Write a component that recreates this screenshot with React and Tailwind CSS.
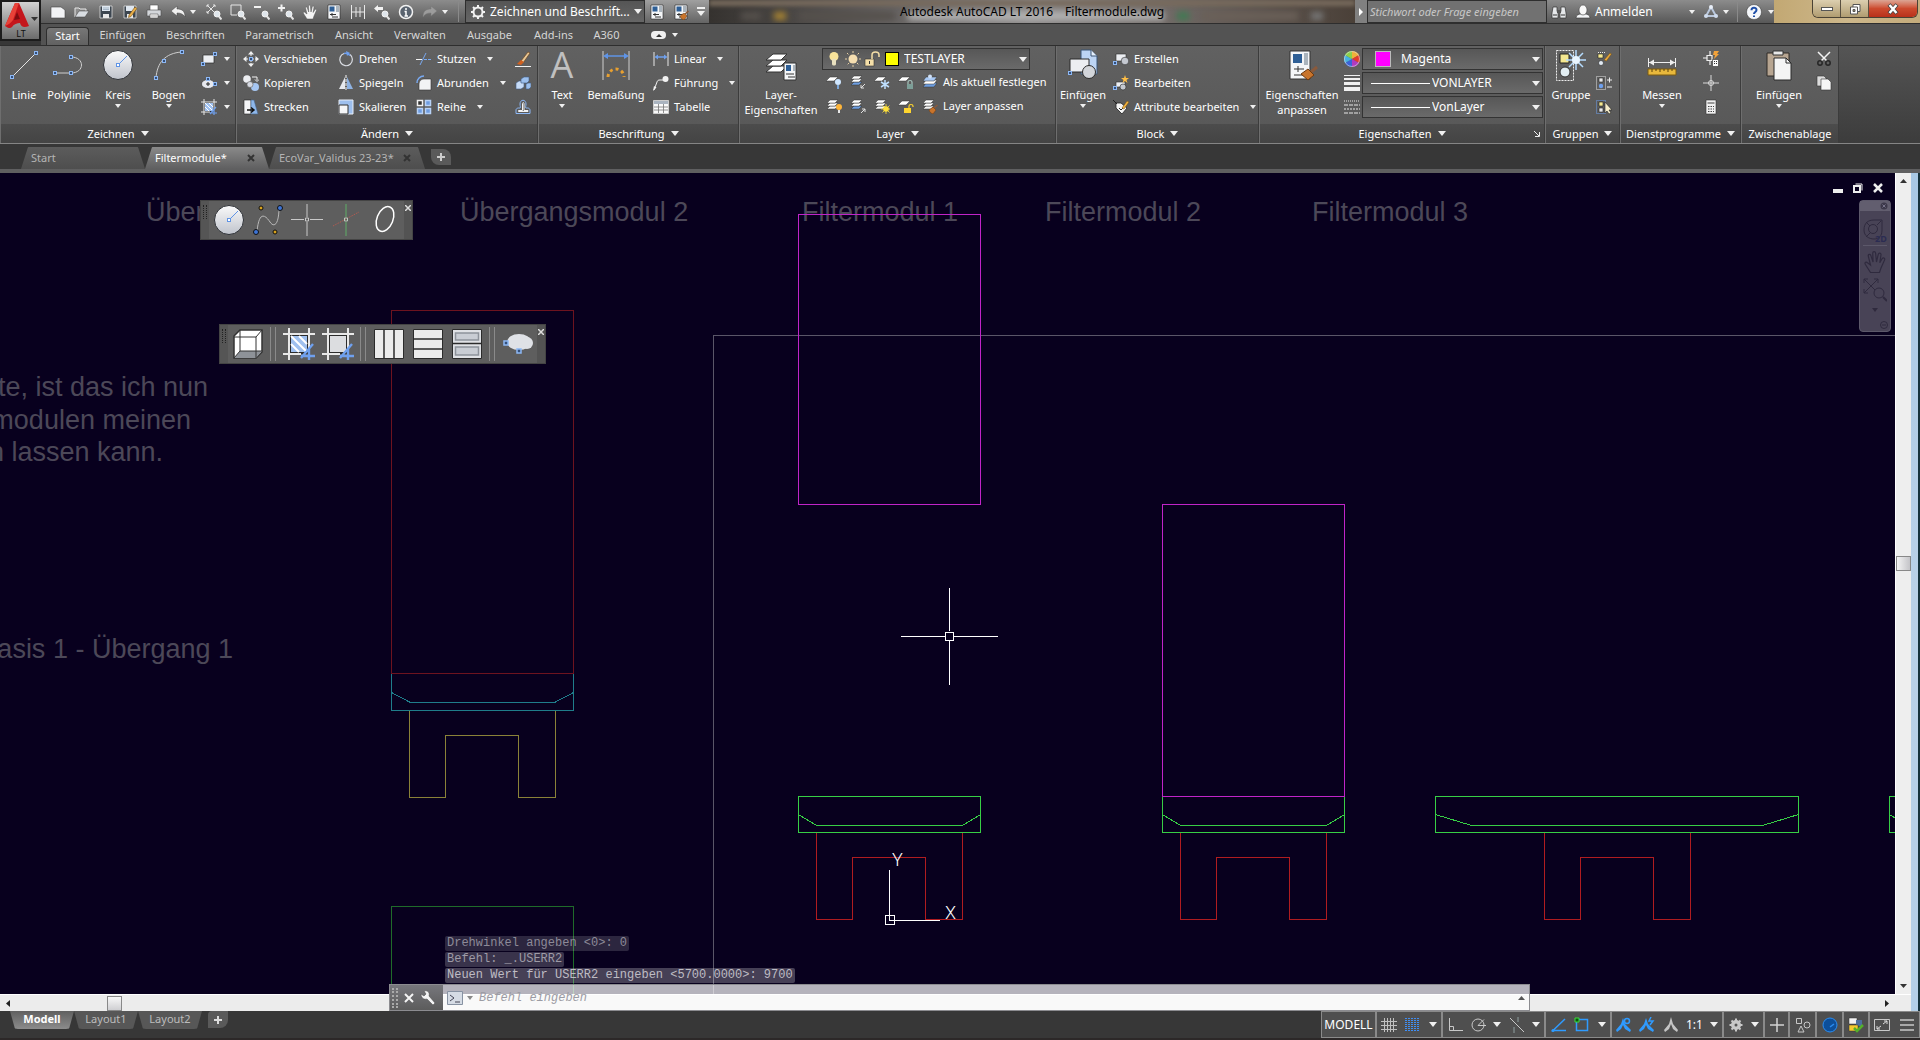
import { clsx } from 'clsx'

/* ---------- icons ---------- */

const BLUE = '#8db8f5'

function Svg({ size = 16, box = 16, className, children }) {
  return (
    <svg width={size} height={size} viewBox={`0 0 ${box} ${box}`} fill="none" className={clsx('shrink-0', className)} aria-hidden="true">
      {children}
    </svg>
  )
}

function Caret({ className }) {
  return (
    <svg width="6" height="4" viewBox="0 0 6 4" className={clsx('shrink-0', className)} aria-hidden="true">
      <path d="M0 0h6L3 4z" fill="#f0f0f0" />
    </svg>
  )
}

function BigCaret({ className }) {
  return (
    <svg width="8" height="5" viewBox="0 0 8 5" className={clsx('shrink-0', className)} aria-hidden="true">
      <path d="M0 0h8L4 5z" fill="#f0f0f0" />
    </svg>
  )
}

const grip = (x, y) => <rect key={`${x}-${y}`} x={x - 1.5} y={y - 1.5} width="3" height="3" fill="#35507a" stroke={BLUE} />

const lens = (
  <>
    <circle cx="11" cy="10" r="3" fill="#dfe6ec" stroke="#f2f2f2" />
    <path d="M13 12.500l2.500 3" stroke="#e6e6e6" strokeWidth="2" />
  </>
)

const layerStack = (
  <>
    <path d="M4 8h8l-3 3H1z" fill="#f4f4f4" stroke="#333" strokeWidth=".5" />
    <path d="M4 5h8L9 8H1z" fill="#fff" stroke="#333" strokeWidth=".5" />
    <path d="M4 2h8L9 5H1z" fill="#fff" stroke="#333" strokeWidth=".5" />
  </>
)

const layerStackBlue = (
  <>
    <path d="M4 8h8l-3 3H1z" fill="#6e9ee0" stroke="#333" strokeWidth=".5" />
    <path d="M4 5h8L9 8H1z" fill="#fff" stroke="#333" strokeWidth=".5" />
    <path d="M4 2h8L9 5H1z" fill="#fff" stroke="#333" strokeWidth=".5" />
  </>
)

const singleLayer = <path d="M4 3h8L8 7H0z" fill="#fff" stroke="#333" strokeWidth=".5" />

const palette = (
  <>
    <path d="M2 1h12v14H2z" fill="#f4f6f8" stroke="#222" strokeWidth=".6" />
    <path d="M3.500 2.500h5v5h-5z" fill="#2e5f96" />
    <path d="M10 2h3v6h-3z" fill="#aab4bd" />
    <path d="M4 10.500h6M6 9v3M6 13h6" stroke="#333" />
  </>
)

const brush = (
  <>
    <path d="M15.500 7L12 10" stroke="#8a5a3c" strokeWidth="1.500" />
    <path d="M7 12l4-3 3 3-3 4-2-1-1-1z" fill="#c8742c" stroke="#6d3a10" strokeWidth=".5" />
  </>
)

const ICONS = {
  new: <path d="M1 3h10l4 3v8H1z" fill="#f2f3f5" stroke="#444" strokeWidth=".6" />,
  open: (
    <>
      <path d="M1 13V4h4l1 1h6v2" fill="#8d8d8d" stroke="#e8e8e8" />
      <path d="M1 13l4-6h10l-4 6z" fill="#d9dde2" stroke="#3a3a3a" strokeWidth=".5" />
    </>
  ),
  save: (
    <>
      <path d="M2 2h12v12H2z" fill="#3d4650" stroke="#dcdcdc" strokeWidth=".8" />
      <path d="M4 2h8v5H4z" fill="#dfe7f0" />
      <path d="M5 10h6v4H5z" fill="#e9e9e9" />
      <path d="M5 4h6M5 5.500h6" stroke="#7d93aa" strokeWidth=".6" />
    </>
  ),
  saveAs: (
    <>
      <path d="M2 2h12v12H2z" fill="#3d4650" stroke="#dcdcdc" strokeWidth=".8" />
      <path d="M4 2h8v5H4z" fill="#dfe7f0" />
      <path d="M5 10h6v4H5z" fill="#e9e9e9" />
      <path d="M7 11l6-8 2 1.500-6 8-2.500 1z" fill="#eab04a" stroke="#73501a" strokeWidth=".6" />
    </>
  ),
  print: (
    <>
      <path d="M4 1h8v6H4z" fill="#fff" stroke="#555" strokeWidth=".6" />
      <path d="M1 6h14v6H1z" fill="#d3d6da" stroke="#4a4a4a" strokeWidth=".6" />
      <path d="M4 10h8v4H4z" fill="#f6f6f6" stroke="#555" strokeWidth=".6" />
      <path d="M5 12h6" stroke="#888" strokeWidth=".6" />
    </>
  ),
  undo: <path d="M1 7l6-5v3c5 0 8 2 8 8-2-3-4-4-8-4v3z" fill="#f0f0f0" stroke="#444" strokeWidth=".5" />,
  redo: <path d="M15 7L9 2v3C4 5 1 7 1 13c2-3 4-4 8-4v3z" fill="#9c9c9c" stroke="#777" strokeWidth=".5" />,
  zoomExt: (
    <>
      <path d="M1 1l8 8M9 1L1 9M1 3V1h2M7 1h2v2M1 7v2h2" stroke="#e6e6e6" />
      {lens}
    </>
  ),
  zoomWin: (
    <>
      <path d="M1 1h10v8M1 1v10h6" stroke="#e6e6e6" />
      {lens}
    </>
  ),
  zoomOut: (
    <>
      <path d="M0 3h7" stroke="#f2f2f2" strokeWidth="2" />
      {lens}
    </>
  ),
  zoomIn: (
    <>
      <path d="M0 4h7M3.500 .5v7" stroke="#f2f2f2" strokeWidth="2" />
      {lens}
    </>
  ),
  zoomPrev: (
    <>
      <path d="M0 4.500L4 1v2h5v3H4v2z" fill="#f2f2f2" />
      {lens}
    </>
  ),
  hand: (
    <path
      d="M5 15L1.500 9.500c-.6-1.200.6-1.900 1.500-1L5 10 3.500 4c-.2-1.200 1.300-1.500 1.700-.4L6.700 8 6.500 2c0-1.300 1.700-1.300 1.900 0L9 8l1.200-5.200c.4-1.200 1.900-.8 1.800.4L11.200 8.500l1.600-2.800c.7-1 2-.3 1.600.9L12 12l-1 3z"
      fill="#f4f4f4"
      stroke="#555"
      strokeWidth=".5"
    />
  ),
  props: palette,
  match: (
    <>
      {palette}
      {brush}
    </>
  ),
  dist: <path d="M1.500 1v14M14.500 1v14M6 3v10M10 3v10M1 8h14" stroke="#e8e8e8" />,
  info: (
    <>
      <circle cx="8" cy="8" r="6.500" fill="#5a6470" stroke="#f2f2f2" strokeWidth="1.500" />
      <path d="M8 4v2M6.500 7.500H8V12M6.500 12h3.500" stroke="#fff" strokeWidth="1.500" />
    </>
  ),
  gear: (
    <>
      <circle cx="8" cy="8" r="4.500" stroke="#f2f2f2" strokeWidth="2" />
      <path d="M8 1v3M8 12v3M1 8h3M12 8h3M3 3l2 2M11 11l2 2M13 3l-2 2M5 11l-2 2" stroke="#f2f2f2" strokeWidth="2" />
    </>
  ),
  binoculars: (
    <>
      <path d="M2 3h4v4l1 2v5H1V9zM10 3h4l1 6v5H9V9l1-2z" fill="#e6e8ea" stroke="#333" strokeWidth=".7" />
      <path d="M6 6h4v3H6z" fill="#555" />
      <path d="M2 11h4M10 11h4" stroke="#333" />
    </>
  ),
  user: (
    <>
      <path d="M1 14c0-3 3-4 5-4h4c2 0 5 1 5 4z" fill="#f2f4f6" stroke="#333" strokeWidth=".6" />
      <ellipse cx="8" cy="6" rx="4" ry="5" fill="#f8f8f8" stroke="#444" strokeWidth=".6" />
    </>
  ),
  exchange: (
    <>
      <path d="M8 3l5 9H3z" stroke="#b9c7dc" strokeWidth="2" />
      <circle cx="8" cy="3" r="2" fill="#e9eff8" />
      <circle cx="3" cy="12" r="2" fill="#cfdbed" />
      <circle cx="13" cy="12" r="2" fill="#cfdbed" />
    </>
  ),
  help: (
    <>
      <circle cx="8" cy="8" r="7.500" fill="#f5f7fa" stroke="#333" strokeWidth=".5" />
      <path d="M5.500 6.200C5.500 3 10.500 3 10.500 6c0 2-2.500 2-2.500 4M8 11.500v1.500" stroke="#1f4fa8" strokeWidth="2" />
    </>
  ),
  rect: (
    <>
      <path d="M2 4h11v8H2z" fill="#eceef2" stroke="#2c2c2c" strokeWidth=".7" />
      {grip(2, 13)}
      {grip(14, 3)}
    </>
  ),
  ellipse: (
    <>
      <ellipse cx="7" cy="9" rx="6.500" ry="4.500" fill="#e6e8ee" stroke="#2c2c2c" strokeWidth=".6" />
      <path d="M5 9h4M7 7v4" stroke="#222" />
      {grip(7, 4)}
      {grip(14, 9)}
    </>
  ),
  hatch: (
    <>
      <path d="M3.500 3.500h9v9h-9z" fill="#9fc0ef" stroke="#2b2b2b" />
      <path d="M4 8l4 4M4 4l8 8M8 4l4 4" stroke="#fff" />
      <path d="M3 0v16M13 0v10M0 3h16M0 13h9" stroke="#e8e8e8" />
      <path d="M9 15l6-7M9 14h7M13 10v6" stroke="#6fa0ee" strokeWidth="1.200" />
    </>
  ),
  boundary: (
    <>
      <path d="M3.500 3.500h9v9h-9z" fill="#dcdde0" stroke="#2b2b2b" />
      <path d="M3 0v16M13 0v10M0 3h16M0 13h9" stroke="#e8e8e8" />
      <path d="M9 15l6-7M9 14h7M13 10v6" stroke="#6fa0ee" strokeWidth="1.200" />
    </>
  ),
  move: (
    <>
      <path d="M8 0l3 3.500H5zM8 16l3-3.500H5zM0 8l3.500-3v6zM16 8l-3.500-3v6z" fill="#f0f0f0" />
      <path d="M8 3v10M3 8h10" stroke="#f0f0f0" strokeDasharray="2 1" />
      <rect x="6.500" y="6.500" width="3" height="3" fill="#35507a" stroke={BLUE} />
    </>
  ),
  copy: (
    <>
      <circle cx="4" cy="4" r="3.800" fill="#eceef2" />
      <circle cx="12" cy="12" r="4" fill="#a6c6f2" />
      <circle cx="7" cy="9.500" r="3" fill="#d5d9e2" stroke="#5e5e5e" strokeWidth=".6" />
      <path d="M9 2h5v3M12 4.500l2 2 2-2" stroke="#f2f2f2" />
    </>
  ),
  stretch: (
    <>
      <path d="M1 1h7v14H1z" fill="#f4f5f7" stroke="#222" strokeWidth=".6" />
      <path d="M8 1h3l4 14H8z" fill="#8eb7ea" stroke="#46648c" strokeWidth=".6" />
      <path d="M4 11h6M8 8.500l3 2.500-3 2.500" stroke="#111" strokeWidth="1.500" />
    </>
  ),
  rotate: (
    <>
      <path d="M12 3.500A6.300 6.300 0 1 1 6 2.500" stroke="#d9dce2" strokeWidth="1.200" />
      <path d="M6 2.500c2-.6 4 0 6 2" stroke="#6fa0ee" strokeWidth="1.500" />
      <path d="M8 0l4 2-3 3z" fill="#6fa0ee" />
    </>
  ),
  mirror: (
    <>
      <path d="M7 2v12H1z" fill="#e8eaee" />
      <path d="M9 2v12h6z" fill="#8eb2e2" />
      <path d="M8 0v16" stroke="#fafafa" strokeDasharray="3 1" />
    </>
  ),
  scale: (
    <>
      <path d="M1 1h14v14H1z" fill="#9dbfee" stroke="#e8eef8" />
      <path d="M1 6h9v9H1z" fill="#f4f5f7" stroke="#333" />
    </>
  ),
  trim: (
    <>
      <path d="M0 8.500h6" stroke="#f2f2f2" />
      <path d="M4 14L10 2" stroke="#79a9f0" />
      <path d="M8 8.500h8" stroke="#79a9f0" strokeDasharray="3 1" />
    </>
  ),
  fillet: (
    <>
      <path d="M3 15V9c0-3 2-5 5-5h7v11z" fill="#f2f3f5" stroke="#333" strokeWidth=".6" />
      <path d="M1 8c0-4 3-7 7-7" stroke="#79a9f0" strokeWidth="1.500" />
    </>
  ),
  array: (
    <>
      <path d="M1.500 1.500h5v5h-5z" fill="#333" stroke="#f2f2f2" strokeWidth="1.500" />
      <path d="M9.500 1.500h5v5h-5zM1.500 9.500h5v5h-5zM9.500 9.500h5v5h-5z" fill="#6f9de0" stroke="#b8d2f6" strokeWidth="1.500" />
    </>
  ),
  erase: (
    <>
      <path d="M6 10L13 1l2 1-7 10z" fill="#e8c896" stroke="#6b3c12" strokeWidth=".6" />
      <path d="M2 13l4-4 3 2-3 3z" fill="#d2601f" />
      <path d="M0 15.500h16" stroke="#f2f2f2" />
    </>
  ),
  explode: (
    <>
      <path d="M1 8l3-2h5v6l-3 2H1z" fill="#c6dcf8" stroke="#3f5d85" strokeWidth=".6" />
      <path d="M6 4l3-2h5v4l-2 2H6zM11 9l2-1h3v4l-2 2h-3z" fill="#9cc0ee" stroke="#3f5d85" strokeWidth=".6" />
    </>
  ),
  offset: (
    <>
      <path d="M1 14.500V11c0-1 1-2 2.500-2H5c1 0 0-2 0-4 0-5 6-5 6 0 0 2-1 4 0 4h1.500c1.500 0 2.500 1 2.500 2v3.500z" stroke="#8db8f5" />
      <path d="M3.500 12.500v-1h4V5c0-2 1.500-2 1.500 0v6.500h4v1z" stroke="#f2f2f2" />
    </>
  ),
  linear: (
    <>
      <path d="M1 1v14M15 1v14" stroke="#e8e8e8" />
      <path d="M3 6h10" stroke="#6fa0ee" strokeWidth="1.500" />
      <path d="M1.500 6L5 3.500v5zM14.500 6L11 3.500v5z" fill="#6fa0ee" />
    </>
  ),
  leader: (
    <>
      <path d="M1 15L4 7c.5-1.500 1-2 3-2h3" stroke="#f2f2f2" />
      <path d="M0 16l1-5 2.500 1.500z" fill="#f2f2f2" />
      <circle cx="12.500" cy="4" r="3" fill="#f2f2f2" />
    </>
  ),
  table: (
    <>
      <path d="M.5 1.500h15v13H.5z" fill="#fafafa" stroke="#ccc" />
      <path d="M1 2h14v3H1z" fill="#aab4c0" />
      <path d="M1 8h14M1 11h14M5.500 5v9M10.500 5v9" stroke="#777" strokeWidth=".8" />
    </>
  ),
  layerOff: (
    <>
      {singleLayer}
      <circle cx="12" cy="8" r="3" fill="#cfe6ff" />
      <path d="M12 11v4" stroke="#7ba5d6" strokeWidth="2" />
    </>
  ),
  layerIso: (
    <>
      {layerStackBlue}
      <path d="M15 10l-4 4M11 11v3h3" stroke="#e2e2e2" />
    </>
  ),
  layerFreeze: (
    <>
      {singleLayer}
      <path d="M11 6v9M7 8l8 5M15 8l-8 5" stroke="#bfe0ff" strokeWidth="1.500" />
    </>
  ),
  layerLock: (
    <>
      {singleLayer}
      <path d="M9 10h6v5H9z" fill="#7d9f98" />
      <path d="M10 10V8c0-2 4-2 4 0v2" stroke="#a7c4bd" strokeWidth="1.200" />
    </>
  ),
  layerCurrent: (
    <>
      <path d="M4 9h11l-3 4H1z" fill="#6e9ee0" stroke="#333" strokeWidth=".5" />
      <path d="M4 6h11l-3 4H1z" fill="#fff" stroke="#333" strokeWidth=".5" />
      <path d="M4 3h11l-3 4H1z" fill="#a9c9f4" stroke="#333" strokeWidth=".5" />
      <circle cx="8" cy="2.500" r="2" fill="#cfe0f6" />
    </>
  ),
  layerOn: (
    <>
      {layerStack}
      <circle cx="13" cy="9" r="3" fill="#ffb63a" />
      <path d="M13 12v3" stroke="#e8e8e8" strokeWidth="2" />
    </>
  ),
  layerUniso: (
    <>
      {layerStackBlue}
      <path d="M11 15l4-4M12 11h3v3" stroke="#e2e2e2" />
    </>
  ),
  layerThaw: (
    <>
      {layerStack}
      <circle cx="12" cy="11" r="2.800" fill="#ffe13a" />
      <path d="M12 6v10M7 11h10M8.500 7.500l7 7M15.500 7.500l-7 7" stroke="#ffe13a" strokeWidth=".8" />
    </>
  ),
  layerUnlock: (
    <>
      {singleLayer}
      <path d="M6 10h7v5H6z" fill="#ffd52e" />
      <path d="M11 10V8c0-2 4-2 4 0v1" stroke="#ffd52e" strokeWidth="1.200" />
    </>
  ),
  layerMatch: (
    <>
      {layerStack}
      {brush}
    </>
  ),
  blockCreate: (
    <>
      <path d="M3 3h10v7H3z" fill="#eceef2" stroke="#2b2b2b" strokeWidth=".6" />
      <circle cx="12" cy="10" r="3.800" fill="#c4c8d0" stroke="#2b2b2b" strokeWidth=".6" />
      {grip(2, 12)}
    </>
  ),
  blockEdit: (
    <>
      <path d="M3 7h9v5H3z" fill="#eceef2" stroke="#2b2b2b" strokeWidth=".6" />
      <circle cx="10" cy="12" r="3" fill="#c4c8d0" stroke="#2b2b2b" strokeWidth=".6" />
      <path d="M12 0l1 3 3 0-2.500 2 1 3-2.500-2-2.500 2 1-3L8 3h3z" fill="#ffbe45" />
      {grip(2, 13)}
    </>
  ),
  attrEdit: (
    <>
      <path d="M3 4h5l6 5-5 6-6-6z" fill="#f4f4f4" stroke="#222" strokeWidth=".8" />
      <path d="M0 1l4 4" stroke="#222" />
      <path d="M6 9l2 2 3-3" stroke="#222" />
      <path d="M9 9l5-7 2 1-5 7z" fill="#f2b23e" stroke="#6e4a10" strokeWidth=".5" />
    </>
  ),
  colorWheel: (
    <>
      <path d="M8 8L8 0A8 8 0 0 1 15 4z" fill="#f0b03a" />
      <path d="M8 8L15 4A8 8 0 0 1 15 12z" fill="#e23b2c" />
      <path d="M8 8L15 12A8 8 0 0 1 8 16z" fill="#b03ac0" />
      <path d="M8 8V16A8 8 0 0 1 1 12z" fill="#3a62d8" />
      <path d="M8 8L1 12A8 8 0 0 1 1 4z" fill="#46b0e0" />
      <path d="M8 8L1 4A8 8 0 0 1 8 0z" fill="#8cd04a" />
      <circle cx="8" cy="8" r="7.500" stroke="#ddd" strokeWidth=".6" />
    </>
  ),
  lineweight: (
    <>
      <path d="M0 .5h16" stroke="#f0f0f0" />
      <path d="M0 4h16" stroke="#f0f0f0" strokeWidth="2" />
      <path d="M0 8.500h16" stroke="#f0f0f0" strokeWidth="3" />
      <path d="M0 14h16" stroke="#f0f0f0" strokeWidth="4" />
    </>
  ),
  linetype: (
    <>
      <path d="M0 2h16" stroke="#e8e8e8" strokeDasharray="1 1" />
      <path d="M0 6h16M0 14h16" stroke="#e8e8e8" strokeDasharray="4 1" />
      <path d="M0 10h16" stroke="#e8e8e8" strokeDasharray="2 1" />
    </>
  ),
  groupEdit: (
    <>
      <path d="M2 1.500h8" stroke="#eee" strokeDasharray="1 1" />
      <path d="M2 3h5v4H2z" fill="#f4e890" stroke="#222" strokeWidth=".6" />
      <circle cx="5" cy="12" r="2.500" fill="#e2eaf2" stroke="#222" strokeWidth=".6" />
      <path d="M8 9l6-7 1.500 1-5 7z" fill="#e8a83c" stroke="#6e4a10" strokeWidth=".5" />
    </>
  ),
  groupAdd: (
    <>
      <path d="M.5 1.500h9v13h-9z" stroke="#e4e4e4" strokeDasharray="1 1" />
      <path d="M3 3h4v4H3z" fill="#e8e8e8" stroke="#222" strokeWidth=".6" />
      <circle cx="5" cy="11" r="2.200" fill="#6fa0ee" />
      <path d="M11 5h5M13.500 2.500v5M11 12h5" stroke="#eee" />
    </>
  ),
  groupSelect: (
    <>
      <path d="M.5 1.500h9v13h-9z" stroke="#6fa0ee" strokeDasharray="1 1" />
      <path d="M3 3h4v4H3z" fill="#f4e890" stroke="#222" strokeWidth=".6" />
      <path d="M3 9h4v4H3z" fill="#e8e8e8" stroke="#222" strokeWidth=".6" />
      <path d="M9 3v11l2-2 2 3 2-1-2-3h3z" fill="#f6eecb" stroke="#222" strokeWidth=".6" />
    </>
  ),
  quickSelect: (
    <>
      <path d="M0 7h4M7 0v4M7 10v4M4 4.500h5v5H4z" stroke="#f0f0f0" strokeWidth="1.200" />
      <path d="M9.500 8.500h6v7h-6z" fill="#fafafa" stroke="#333" strokeWidth=".6" />
      <path d="M11 10.500h1M13 10.500h1M11 12.500h1M13 12.500h1" stroke="#333" />
      <path d="M11 0h5l-2 3h2l-5 5 1-4h-2z" fill="#f2a23a" />
    </>
  ),
  point: (
    <>
      <path d="M8 0v16M0 8h16" stroke="#dadada" />
      <circle cx="8" cy="8" r="2.500" stroke="#dadada" />
    </>
  ),
  calc: (
    <>
      <path d="M3 1h10v14H3z" fill="#f2f2f2" stroke="#333" strokeWidth=".6" />
      <path d="M4.500 3h7v2h-7z" fill="#999" />
      <path d="M5 7.500h6M5 10h6M5 12.500h6" stroke="#444" strokeDasharray="1.500 1" />
    </>
  ),
  cut: (
    <>
      <path d="M2 1l9 9M14 1l-9 9" stroke="#f4f4f4" strokeWidth="1.500" />
      <circle cx="4" cy="12" r="2.200" stroke="#262626" strokeWidth="1.500" />
      <circle cx="12" cy="12" r="2.200" stroke="#262626" strokeWidth="1.500" />
    </>
  ),
  copyClip: (
    <>
      <path d="M1 1h7l2 2v8H1z" fill="#dcdcdc" stroke="#333" strokeWidth=".6" />
      <path d="M5 4h7l3 3v8H5z" fill="#f6f6f6" stroke="#333" strokeWidth=".6" />
    </>
  ),
  grid: <path d="M3.500 1v14M6.500 1v14M9.500 1v14M12.500 1v14M0 4.500h16M0 8.500h16M0 12.500h16" stroke="#c0c0c0" />,
  snap: <path d="M1 1v14M4 1v14M7 1v14M10 1v14M13 1v14" stroke="#3f8ef5" strokeWidth="2" strokeDasharray="1 1" />,
  ortho: <path d="M2.500 1v12.500H16M2.500 9.500h4v4" stroke="#c8c8c8" />,
  polar: (
    <>
      <circle cx="8" cy="8" r="6" stroke="#c8c8c8" />
      <path d="M16 8.500H8l6-6" stroke="#c8c8c8" />
    </>
  ),
  iso: (
    <>
      <path d="M1 1l14 14" stroke="#c8c8c8" />
      <path d="M9 0v5M5 10v6" stroke="#8f9f9f" />
    </>
  ),
  track: (
    <>
      <path d="M15 2L3 13.500h13" stroke="#2f9bff" strokeWidth="1.500" />
      <circle cx="3" cy="13.500" r="1.500" fill="#2f9bff" />
    </>
  ),
  osnap: (
    <>
      <path d="M2.500 2.500h11v11h-11z" stroke="#2f9bff" strokeWidth="1.500" />
      <path d="M1 1h4v4H1z" fill="#0a5a0a" stroke="#3ddc3d" />
    </>
  ),
  anno: <path d="M8 0l2 7 5 6-1 2-4-3-2-5-2 5-4 3-1-2 5-6z" fill="#c4c4c4" />,
  annoVis: (
    <>
      <path d="M7 1l2 6 6 6-1 2-5-3-2-4-2 4-4 3-1-2 5-6z" fill="#2f9bff" />
      <circle cx="11" cy="4" r="2.500" stroke="#2f9bff" strokeWidth="1.500" />
    </>
  ),
  annoAuto: (
    <>
      <path d="M7 1l2 6 6 6-1 2-5-3-2-4-2 4-4 3-1-2 5-6z" fill="#2f9bff" />
      <path d="M12 0l-2 4h4l-3 4" stroke="#2f9bff" strokeWidth="1.500" />
    </>
  ),
  cog: (
    <>
      <circle cx="8" cy="8" r="3.500" stroke="#c8c8c8" strokeWidth="3" />
      <path d="M8 1.500v13M1.500 8h13M3.500 3.500l9 9M12.500 3.500l-9 9" stroke="#c8c8c8" strokeWidth="2" />
      <circle cx="8" cy="8" r="1.500" fill="#555" />
    </>
  ),
  plus: <path d="M8 1v14M1 8h14" stroke="#d4d4d4" strokeWidth="1.500" />,
  shapes: (
    <>
      <path d="M1.500 1.500h5v5h-5zM6 9l3 6H3z" stroke="#c8c8c8" />
      <circle cx="12" cy="8" r="3" stroke="#c8c8c8" />
    </>
  ),
  perf: (
    <>
      <circle cx="8" cy="8" r="7" fill="#0d4f9a" stroke="#2b8cf0" />
      <path d="M8 10l4-3" stroke="#2b8cf0" strokeWidth="1.500" />
    </>
  ),
  trusted: (
    <>
      <path d="M1 1h8v6H1z" fill="#f2f2f2" stroke="#333" strokeWidth=".5" />
      <path d="M8 3h6v6H8z" fill="#4c6f9e" />
      <path d="M1 8h9v6H1z" fill="#f3c92f" stroke="#333" strokeWidth=".5" />
      <path d="M6 11l3 3 6-6" stroke="#54b02a" strokeWidth="2.500" />
    </>
  ),
  clean: (
    <>
      <path d="M.5 2.500h15v11H.5z" stroke="#c8c8c8" />
      <path d="M9 7l4-3M10 4h3v3M7 9l-4 3M3 9v3h3" stroke="#dcdcdc" />
    </>
  ),
  menu: <path d="M1 3h14M1 8h14M1 13h14" stroke="#c8c8c8" strokeWidth="1.500" />,
}

/* 32px drawings of the large ribbon buttons */
const BIG = {
  line: (
    <>
      <path d="M4 28L28 4" stroke="#e4e4e4" />
      {grip(4, 28)}
      {grip(28, 4)}
    </>
  ),
  polyline: (
    <>
      <path d="M2 24h16c14 0 14-16 0-16" stroke="#cfcfcf" />
      {grip(2, 24)}
      {grip(18, 24)}
      {grip(18, 8)}
    </>
  ),
  circle: (
    <>
      <circle cx="16" cy="16" r="14.500" fill="url(#disc)" stroke="#2e3136" />
      <path d="M16 16L25 7" stroke="#5f94e6" />
      <rect x="14.500" y="14.500" width="3" height="3" fill="#fff" stroke="#5f94e6" />
    </>
  ),
  arc: (
    <>
      <path d="M3 29C4 14 12 4 29 3" stroke="#cfcfcf" />
      {grip(3, 29)}
      {grip(11, 12)}
      {grip(29, 3)}
    </>
  ),
  dimension: (
    <>
      <path d="M3 2v29M29 2v29" stroke="#cfcfcf" />
      <path d="M6 7h20" stroke="#5f94e6" strokeWidth="1.500" />
      <path d="M3 7l5-3v6zM29 7l-5-3v6z" fill="#5f94e6" />
      <path d="M8 28a8 8 0 0 1 16 0" stroke="#e8a030" strokeWidth="3" strokeDasharray="3 3" />
    </>
  ),
  layers: (
    <>
      <path d="M8 17h14l-6 6H1z" fill="#fff" stroke="#333" />
      <path d="M8 11h14l-6 6H1z" fill="#fff" stroke="#333" />
      <path d="M8 5h14l-6 6H1z" fill="#fff" stroke="#333" />
      <path d="M19 14h12v17H19z" fill="#f4f6f8" stroke="#333" />
      <path d="M21 16h5v6h-5z" fill="#2e5f96" />
      <path d="M28 16h2v6h-2z" fill="#aab4bd" />
      <path d="M21 25h8M23 28h7" stroke="#333" />
    </>
  ),
  insert: (
    <>
      <path d="M14 1h10l6 6v18H14z" fill="#bcd4f4" stroke="#3b5474" />
      <path d="M24 1v6h6" fill="#e6f0fc" stroke="#3b5474" />
      <path d="M3 10h19v13H3z" fill="#eceef2" stroke="#2b2b2b" />
      <circle cx="22" cy="23" r="6.500" fill="#d2d5da" stroke="#2b2b2b" />
      {grip(3, 24)}
    </>
  ),
  matchProps: (
    <>
      <path d="M4 2h20v28H4z" fill="#f4f6f8" stroke="#333" />
      <path d="M7 5h9v9H7z" fill="#2e5f96" />
      <path d="M18 4h4v12h-4z" fill="#aab4bd" />
      <path d="M8 20h10M12 17v6M8 26h10" stroke="#333" />
      <path d="M31 18l-6 5" stroke="#8a5a3c" strokeWidth="3" />
      <path d="M15 25l7-5 6 6-6 5z" fill="#c8742c" stroke="#6d3a10" />
    </>
  ),
  group: (
    <>
      <path d="M1.500 1.500h17v30h-17z" stroke="#eee" strokeDasharray="2 1" />
      <path d="M5 5h9v9H5z" fill="#f4e890" stroke="#222" />
      <circle cx="10" cy="23" r="5" fill="#e2eef2" stroke="#333" />
      <path d="M21 1v20M11 11h20M14 4l14 14M28 4L14 18" stroke="#b5dcff" strokeWidth="1.500" />
      <circle cx="21" cy="11" r="4" fill="#e8f5ff" />
    </>
  ),
  measure: (
    <>
      <path d="M2.500 9v9M29.500 9v9M3 13.500h26" stroke="#eee" />
      <path d="M3 13.500l5-3v6zM29 13.500l-5-3v6z" fill="#eee" />
      <path d="M2 20h28v6H2z" fill="#e8b83c" stroke="#7a5a10" />
      <path d="M6 20v3M10 20v2M14 20v3M18 20v2M22 20v3M26 20v2" stroke="#5d430a" />
    </>
  ),
  paste: (
    <>
      <path d="M4 4h22v23H4z" fill="#b7a591" stroke="#2e2a26" />
      <path d="M10 2h10v4H10z" fill="#e8e8e8" stroke="#333" />
      <path d="M11 9h12l5 5v17H11z" fill="#f4f4f4" stroke="#2b2b2b" />
      <path d="M23 9v5h5" stroke="#2b2b2b" />
    </>
  ),
  spline: (
    <>
      <path d="M5 28C7 5 14 12 18 18s9 3 9-15" stroke="#b9b9b9" />
      <circle cx="4" cy="28" r="2.500" fill="#3d74d6" stroke="#111" />
      <circle cx="28" cy="4" r="2.500" fill="#3d74d6" stroke="#111" />
      <circle cx="9" cy="4" r="2" fill="#d9a21c" stroke="#111" />
      <circle cx="23" cy="28" r="2" fill="#d9a21c" stroke="#111" />
    </>
  ),
  xline: (
    <>
      <path d="M16 0v13M16 18v14M0 15.500h13M19 15.500h13" stroke="#c9c9c9" />
      <path d="M14.500 14h3v3h-3z" stroke="#c9c9c9" />
    </>
  ),
  ray: (
    <>
      <path d="M16 0v13M16 18v14" stroke="#5fae66" />
      <path d="M3 22L29 8" stroke="#c05a4e" strokeDasharray="1 1" />
      <path d="M14.500 14h3v3h-3z" stroke="#b9c9b9" />
    </>
  ),
  ellipseTilt: <ellipse cx="16" cy="15" rx="8" ry="13" stroke="#fff" strokeWidth="1.500" transform="rotate(22 16 15)" />,
  box3d: (
    <>
      <path d="M2 8l6-6h22v22l-6 6H2z" fill="#fff" stroke="#333" strokeWidth="1.500" />
      <path d="M2 30l6-7h22l-6 7z" fill="#8e9298" />
      <path d="M2 9h22v21M24 9l6-7M8 2v21h22M8 23l-6 7" stroke="#333" />
    </>
  ),
  cols: (
    <>
      <path d="M1.500 1.500h29v29h-29z" fill="#ececec" stroke="#2b2b2b" />
      <path d="M11 2v28M21 2v28" stroke="#2b2b2b" strokeWidth="1.500" />
    </>
  ),
  rows: (
    <>
      <path d="M1.500 1.500h29v29h-29z" fill="#ececec" stroke="#2b2b2b" />
      <path d="M2 11h28M2 21h28" stroke="#2b2b2b" strokeWidth="1.500" />
    </>
  ),
  frames: (
    <>
      <path d="M1.500 1.500h29v29h-29z" fill="#dfe1e5" stroke="#2b2b2b" />
      <path d="M2 15.500h28" stroke="#2b2b2b" strokeWidth="1.500" />
      <path d="M4.500 5h23v7h-23zM4.500 19h23v8h-23z" fill="#c9cdd4" stroke="#8d929a" strokeWidth="1.500" />
    </>
  ),
  cloud: (
    <>
      <ellipse cx="17" cy="14" rx="12" ry="8" fill="#dfe1e6" />
      <circle cx="25" cy="15" r="6" fill="#dfe1e6" />
      <rect x="2" y="13" width="4" height="4" fill="#35507a" stroke={BLUE} strokeWidth="1.500" />
      <rect x="15" y="21" width="4" height="4" fill="#35507a" stroke={BLUE} strokeWidth="1.500" />
    </>
  ),
}

function Icon({ name, size = 16 }) {
  return <Svg size={size}>{ICONS[name]}</Svg>
}

function BigIcon({ name, size = 32 }) {
  return (
    <Svg size={size} box={32}>
      {BIG[name]}
    </Svg>
  )
}

/* ---------- title bar ---------- */

const QUICK = [
  ['new', 'Neu'],
  ['open', 'Öffnen'],
  ['save', 'Speichern'],
  ['saveAs', 'Speichern unter'],
  ['print', 'Plotten'],
  ['undo', 'Zurück', true],
  ['zoomExt', 'Zoom Grenzen'],
  ['zoomWin', 'Zoom Fenster'],
  ['zoomOut', 'Verkleinern'],
  ['zoomIn', 'Vergrößern'],
  ['hand', 'Pan'],
  ['props', 'Eigenschaften'],
  ['dist', 'Abstand'],
  ['zoomPrev', 'Zoom Vorher'],
  ['info', 'Info'],
  ['redo', 'Wiederherstellen', true],
]

function TitleBar() {
  return (
    <div className="flex h-6 items-stretch border-b border-[#2e2e2e] bg-[#5a5a5a]">
      <div className="flex items-center bg-linear-to-b from-[#8c8c8c] to-[#585858] pr-1.5 pl-[5px]">
        {QUICK.map(([icon, label, menu]) => (
          <button key={icon} type="button" aria-label={label} className={clsx('flex h-6 items-center', menu ? 'w-9 gap-1 pl-1' : 'w-6 justify-center')}>
            <Icon name={icon} />
            {menu && <Caret />}
          </button>
        ))}
        <span className="ml-1 h-5 w-px bg-[#8a8a8a]" />
      </div>
      <label className="flex w-[180px] items-center gap-1 border border-[#2e2e2e] bg-linear-to-b from-[#555] to-[#666] pr-0.5 pl-1">
        <Icon name="gear" />
        <select aria-label="Arbeitsbereich" className="min-w-0 flex-1 appearance-none bg-transparent text-xs text-white">
          <option>Zeichnen und Beschrift...</option>
        </select>
        <BigCaret />
      </label>
      <div className="flex w-16 items-center gap-2 bg-linear-to-b from-[#a0a0a0] to-[#646464] pl-1">
        <Icon name="props" />
        <Icon name="match" />
        <span className="flex flex-col items-center gap-0.5">
          <span className="h-0.5 w-2 bg-[#f0f0f0]" />
          <BigCaret />
        </span>
      </div>
      <div className="relative flex-1 overflow-hidden bg-linear-to-r from-[#35322f] via-[#8d8a8a] to-[#4a4038]">
        <div className="absolute inset-x-0 top-0 h-1.5 bg-[#776a5c] blur-[2px]" />
        <div className="absolute inset-x-8 top-3 flex justify-between blur-[3px]" aria-hidden="true">
          <span className="h-2 w-5 bg-[#55504c]" />
          <span className="h-2 w-3 bg-[#a88432]" />
          <span className="h-2 w-24 bg-[#55504c]" />
          <span className="h-2 w-64 bg-[#b5b5b5]" />
          <span className="h-2 w-3 bg-[#3f7a52]" />
          <span className="h-2 w-24 bg-[#6a6058]" />
          <span className="h-2 w-3 bg-[#777]" />
        </div>
        <h1 className="relative flex h-6 items-center justify-center gap-3 text-xs text-black">
          <span>Autodesk AutoCAD LT 2016</span>
          <span>Filtermodule.dwg</span>
        </h1>
      </div>
      <button type="button" aria-label="Infocenter" className="flex w-3 items-center justify-center bg-[#808080]">
        <svg width="4" height="8" viewBox="0 0 4 8">
          <path d="M0 0v8l4-4z" fill="#fff" />
        </svg>
      </button>
      <input
        aria-label="Suche"
        placeholder="Stichwort oder Frage eingeben"
        className="w-[180px] border border-[#2e2e2e] bg-[#717171] px-0.5 text-[11px] italic placeholder:text-[#c8c8c8]"
      />
      <div className="flex w-[227px] items-center bg-linear-to-b from-[#8c8c8c] to-[#585858] pl-1 text-xs text-white">
        <Icon name="binoculars" />
        <button type="button" className="ml-2 flex w-[120px] items-center gap-1">
          <Icon name="user" />
          <span className="flex-1 text-left">Anmelden</span>
          <Caret />
        </button>
        <button type="button" aria-label="Exchange Apps" className="ml-2 flex items-center gap-1">
          <Icon name="exchange" />
          <Caret />
        </button>
        <span className="mx-2 h-5 w-px bg-[#8a8a8a]" />
        <button type="button" aria-label="Hilfe" className="flex items-center gap-1.5">
          <Icon name="help" />
          <Caret />
        </button>
      </div>
      <div className="flex w-[146px] items-start justify-end bg-linear-to-r from-[#c2a873] via-[#cdb78b] to-[#c4ac7c] pr-0.5">
        <div className="flex h-[18px] overflow-hidden rounded-b-md border border-t-0 border-[#4a4234]">
          <button type="button" aria-label="Minimieren" className="flex w-7 items-center justify-center border-r border-[#5a5040] bg-linear-to-b from-[#dccfb0] to-[#b09c70]">
            <span className="h-1 w-3 border border-[#555] bg-white" />
          </button>
          <button type="button" aria-label="Wiederherstellen" className="flex w-7 items-center justify-center border-r border-[#5a5040] bg-linear-to-b from-[#dccfb0] to-[#b09c70]">
            <Svg size={12} box={12}>
              <path d="M4 1.500h7v7H4z" fill="#fff" stroke="#555" />
              <path d="M1.500 4h7v7h-7z" fill="#fff" stroke="#555" />
              <path d="M4 6.500h2v2H4z" fill="#a08c66" stroke="#555" />
            </Svg>
          </button>
          <button type="button" aria-label="Schließen" className="flex w-12 items-center justify-center bg-linear-to-b from-[#dba594] via-[#cc4a2e] to-[#b8301a]">
            <Svg size={12} box={12}>
              <path d="M2 1.500l8 9M10 1.500l-8 9" stroke="#444" strokeWidth="4" />
              <path d="M2.500 2l7 8M9.500 2l-7 8" stroke="#fff" strokeWidth="2.500" />
            </Svg>
          </button>
        </div>
      </div>
    </div>
  )
}

const RIBBON_TABS = [
  ['Start', 'w-[43px]'],
  ['Einfügen', 'w-[67px]'],
  ['Beschriften', 'w-[79px]'],
  ['Parametrisch', 'w-[89px]'],
  ['Ansicht', 'w-[60px]'],
  ['Verwalten', 'w-[72px]'],
  ['Ausgabe', 'w-[67px]'],
  ['Add-ins', 'w-[61px]'],
  ['A360', 'w-[45px]'],
]

function RibbonTabs() {
  return (
    <nav className="flex h-[21px] items-end bg-[#535353] pl-[5px]">
      {RIBBON_TABS.map(([label, width], idx) => (
        <button
          key={label}
          type="button"
          className={clsx(
            'flex h-[18px] items-center justify-center pb-0.5 text-[11px] whitespace-nowrap',
            width,
            idx === 0 ? 'rounded-t-sm border border-b-0 border-[#2e2e2e] bg-linear-to-b from-[#777] to-[#616161] text-white' : 'text-[#d6d6d6]',
          )}
        >
          {label}
        </button>
      ))}
      <button type="button" aria-label="Multifunktionsleiste minimieren" className="ml-[22px] flex h-[18px] items-center gap-1.5 pb-0.5">
        <span className="flex h-2 w-[15px] items-center justify-center rounded-sm bg-[#f0f0f0]">
          <svg width="6" height="3" viewBox="0 0 6 3">
            <path d="M0 3h6L3 0z" fill="#333" />
          </svg>
        </span>
        <Caret />
      </button>
    </nav>
  )
}

function Header() {
  return (
    <header className="flex">
      <button type="button" aria-label="Anwendungsmenü" className="relative z-10 flex h-[41px] w-[41px] shrink-0 border-2 border-[#1c1c1c] bg-linear-to-b from-[#d2d2d2] to-[#6c6c6c]">
        <svg width="37" height="37" viewBox="0 0 37 37">
          <path d="M3 24L13 1h4l10 23c-5 2-8 1-9-3-3 0-6 1-8 4-2 2-4 1-7-1z" fill="#c4161c" />
          <path d="M13 1h4l-6 17c-2 3-5 5-8 6z" fill="#e84238" />
          <path d="M15 10l3 7-6 1z" fill="#7f0d10" />
          <path d="M29 15h7l-3.500 4z" fill="#333" />
          <text x="19" y="35" textAnchor="middle" fontSize="9" fill="#111">
            LT
          </text>
        </svg>
      </button>
      <div className="min-w-0 flex-1">
        <TitleBar />
        <RibbonTabs />
      </div>
    </header>
  )
}

/* ---------- ribbon ---------- */

function Panel({ title, width, menu = true, launcher, children }) {
  return (
    <section className={clsx('flex shrink-0 flex-col border-r border-[#3c3c3c]', width)}>
      <div className="flex h-[78px] border-l border-[#6e6e6e] bg-linear-to-b from-[#616161] to-[#595959] pt-px">{children}</div>
      <div className="relative flex h-[19px] items-center justify-center gap-1.5 border-l border-[#6e6e6e] bg-linear-to-b from-[#4c4c4c] to-[#444] text-[11px] whitespace-nowrap text-white">
        <h2>{title}</h2>
        {menu && <BigCaret />}
        {launcher && (
          <Svg size={6} box={6} className="absolute right-1 bottom-1.5">
            <path d="M0 0l5 5M5.500 1v4.500H1" stroke="#eee" />
          </Svg>
        )}
      </div>
    </section>
  )
}

function BigButton({ icon, label, width, menu, children }) {
  return (
    <button type="button" className={clsx('flex shrink-0 flex-col items-center pt-0.5 text-[11px] leading-[15px] whitespace-nowrap text-white', width)}>
      {icon ? <BigIcon name={icon} /> : children}
      <span className="mt-1.5">
        {label.split('|').map((part) => (
          <span key={part} className="block">
            {part}
          </span>
        ))}
      </span>
      {menu && <Caret className="mt-0.5" />}
    </button>
  )
}

function SmallButton({ icon, label, menu }) {
  return (
    <button type="button" aria-label={label} className="flex h-6 items-center gap-[5px] text-[11px] whitespace-nowrap text-white">
      <Icon name={icon} />
      {label}
      {menu && <Caret className="ml-1.5" />}
    </button>
  )
}

function IconButton({ icon, label, menu }) {
  return (
    <button type="button" aria-label={label} className="flex h-6 items-center gap-[7px]">
      <Icon name={icon} />
      {menu && <Caret />}
    </button>
  )
}

function Combo({ label, value, className, children }) {
  return (
    <div className={clsx('flex h-[22px] items-center border border-[#333] bg-linear-to-b from-[#575757] to-[#6a6a6a] pr-0.5', className)}>
      {children}
      <select aria-label={label} className="min-w-0 flex-1 appearance-none bg-transparent text-xs text-white">
        <option>{value}</option>
      </select>
      <BigCaret />
    </div>
  )
}

const LAYER_TOOLS = [
  ['layerOff', 'Layer aus'],
  ['layerIso', 'Layer isolieren'],
  ['layerFreeze', 'Layer frieren'],
  ['layerLock', 'Layer sperren'],
]

const LAYER_TOOLS_2 = [
  ['layerOn', 'Layer ein'],
  ['layerUniso', 'Isolierung aufheben'],
  ['layerThaw', 'Layer tauen'],
  ['layerUnlock', 'Layer entsperren'],
]

function Ribbon() {
  return (
    <div className="flex border-t border-b border-t-[#2e2e2e] border-b-[#858585] bg-linear-to-b from-[#555] to-[#3c3c3c]">
      <Panel title="Zeichnen" width="w-[236px]">
        <BigButton icon="line" label="Linie" width="w-[46px]" />
        <BigButton icon="polyline" label="Polylinie" width="w-[44px]" />
        <BigButton icon="circle" label="Kreis" width="w-[54px]" menu />
        <BigButton icon="arc" label="Bogen" width="w-[47px]" menu />
        <div className="ml-[9px]">
          <IconButton icon="rect" label="Rechteck" menu />
          <IconButton icon="ellipse" label="Ellipse" menu />
          <IconButton icon="hatch" label="Schraffur" menu />
        </div>
      </Panel>

      <Panel title="Ändern" width="w-[302px]">
        <div className="ml-1.5 w-[95px]">
          <SmallButton icon="move" label="Verschieben" />
          <SmallButton icon="copy" label="Kopieren" />
          <SmallButton icon="stretch" label="Strecken" />
        </div>
        <div className="w-[78px]">
          <SmallButton icon="rotate" label="Drehen" />
          <SmallButton icon="mirror" label="Spiegeln" />
          <SmallButton icon="scale" label="Skalieren" />
        </div>
        <div className="w-[99px]">
          <SmallButton icon="trim" label="Stutzen" menu />
          <SmallButton icon="fillet" label="Abrunden" menu />
          <SmallButton icon="array" label="Reihe" menu />
        </div>
        <div>
          <IconButton icon="erase" label="Löschen" />
          <IconButton icon="explode" label="Ursprung" />
          <IconButton icon="offset" label="Versetzen" />
        </div>
      </Panel>

      <Panel title="Beschriftung" width="w-[201px]">
        <BigButton label="Text" width="w-[46px]" menu>
          <span className="flex h-8 items-center font-['Open_Sans'] text-4xl leading-8 text-[#c0c0c0]">A</span>
        </BigButton>
        <BigButton icon="dimension" label="Bemaßung" width="w-[62px]" />
        <div className="ml-1.5">
          <SmallButton icon="linear" label="Linear" menu />
          <SmallButton icon="leader" label="Führung" menu />
          <SmallButton icon="table" label="Tabelle" />
        </div>
      </Panel>

      <Panel title="Layer" width="w-[317px]">
        <BigButton icon="layers" label="Layer-|Eigenschaften" width="w-[82px]" />
        <div className="min-w-0 pt-px">
          <Combo label="Layer" value="TESTLAYER" className="w-[208px] gap-[3px] pl-[3px]">
            <Svg>
              <circle cx="8" cy="5.500" r="4.500" fill="#f8e39a" />
              <path d="M6 8h4v5c0 2-4 2-4 0z" fill="#e9e0bf" />
            </Svg>
            <Svg>
              <circle cx="8" cy="8" r="4.500" fill="#f5deb0" />
              <path d="M8 0v16M0 8h16M2 2l12 12M14 2L2 14" stroke="#e4cfa4" strokeDasharray="2 12" />
            </Svg>
            <Svg>
              <path d="M1 8h9v7H1z" fill="#f5dfa8" stroke="#333" strokeWidth=".6" />
              <path d="M8 8V4c0-4 7-4 7 0v2" stroke="#f5dfa8" strokeWidth="1.500" />
              <path d="M5.500 10v3" stroke="#333" />
            </Svg>
            <span className="mr-0.5 ml-0.5 h-3.5 w-3.5 border border-black bg-[#ff0]" />
          </Combo>
          <div className="flex gap-2 pl-1">
            {LAYER_TOOLS.map(([icon, label]) => (
              <IconButton key={icon} icon={icon} label={label} />
            ))}
            <SmallButton icon="layerCurrent" label="Als aktuell festlegen" />
          </div>
          <div className="flex gap-2 pl-1">
            {LAYER_TOOLS_2.map(([icon, label]) => (
              <IconButton key={icon} icon={icon} label={label} />
            ))}
            <SmallButton icon="layerMatch" label="Layer anpassen" />
          </div>
        </div>
      </Panel>

      <Panel title="Block" width="w-[203px]">
        <BigButton icon="insert" label="Einfügen" width="w-[52px]" menu />
        <div className="ml-1">
          <SmallButton icon="blockCreate" label="Erstellen" />
          <SmallButton icon="blockEdit" label="Bearbeiten" />
          <SmallButton icon="attrEdit" label="Attribute bearbeiten" menu />
        </div>
      </Panel>

      <Panel title="Eigenschaften" width="w-[286px]" launcher>
        <BigButton icon="matchProps" label="Eigenschaften|anpassen" width="w-[84px]" />
        <div className="flex flex-col">
          <div className="flex h-6 items-center gap-0.5">
            <Icon name="colorWheel" />
            <Combo label="Farbe" value="Magenta" className="w-[181px] pl-3">
              <span className="mr-2.5 h-4 w-4 border border-[#bbb] bg-[#f0f]" />
            </Combo>
          </div>
          <div className="flex h-6 items-center gap-0.5">
            <Icon name="lineweight" />
            <Combo label="Linienstärke" value="VONLAYER" className="w-[181px] gap-0.5 pl-2">
              <span className="h-px w-[59px] bg-white" />
            </Combo>
          </div>
          <div className="flex h-6 items-center gap-0.5">
            <Icon name="linetype" />
            <Combo label="Linientyp" value="VonLayer" className="w-[181px] gap-0.5 pl-2">
              <span className="h-px w-[59px] bg-white" />
            </Combo>
          </div>
        </div>
      </Panel>

      <Panel title="Gruppen" width="w-[75px]">
        <BigButton icon="group" label="Gruppe" width="w-[50px]" />
        <div>
          <IconButton icon="groupEdit" label="Gruppe bearbeiten" />
          <IconButton icon="groupAdd" label="Zur Gruppe hinzufügen" />
          <IconButton icon="groupSelect" label="Gruppenauswahl" />
        </div>
      </Panel>

      <Panel title="Dienstprogramme" width="w-[121px]">
        <BigButton icon="measure" label="Messen" width="w-[82px]" menu />
        <div>
          <IconButton icon="quickSelect" label="Schnellauswahl" />
          <IconButton icon="point" label="Punktstil" />
          <IconButton icon="calc" label="Taschenrechner" />
        </div>
      </Panel>

      <Panel title="Zwischenablage" width="w-[98px]" menu={false}>
        <BigButton icon="paste" label="Einfügen" width="w-[74px]" menu />
        <div>
          <IconButton icon="cut" label="Ausschneiden" />
          <IconButton icon="copyClip" label="Kopieren" />
        </div>
      </Panel>
    </div>
  )
}

/* ---------- drawing tabs ---------- */

function FileTab({ label, width, active, closable }) {
  return (
    <div
      className={clsx(
        'flex h-[22px] shrink-0 items-center justify-between rounded-t-lg pr-3.5 pl-2.5 text-[11px] [clip-path:polygon(7px_0,calc(100%-7px)_0,100%_100%,0_100%)]',
        width,
        active ? 'bg-linear-to-b from-[#8a8a8a] to-[#5f5f60] text-white' : 'bg-linear-to-b from-[#5c5c5c] to-[#4e4e4e] text-[#b4b4b4]',
      )}
    >
      <a href="#drawing" className="whitespace-nowrap">
        {label}
      </a>
      {closable && (
        <button type="button" aria-label={`${label} schließen`}>
          <Svg size={8} box={8}>
            <path d="M1 1l6 6M7 1L1 7" stroke="#333" strokeWidth="2" />
          </Svg>
        </button>
      )}
    </div>
  )
}

function FileTabs() {
  return (
    <div className="flex h-[29px] items-end border-b-4 border-[#5f5f60] bg-[#373737] pl-[21px]">
      <FileTab label="Start" width="w-[124px]" />
      <FileTab label="Filtermodule*" width="w-[124px]" active closable />
      <FileTab label="EcoVar_Validus 23-23*" width="w-[156px]" closable />
      <button type="button" aria-label="Neue Zeichnung" className="mb-1 ml-1.5 flex h-4 w-5 items-center justify-center rounded-tr-lg rounded-bl-lg bg-[#5a5a5a]">
        <Svg size={8} box={8}>
          <path d="M4 0v8M0 4h8" stroke="#ccc" strokeWidth="2" />
        </Svg>
      </button>
    </div>
  )
}

/* ---------- drawing area ---------- */

// plate with the bent inner contour, drawn from its top left corner
function Plate({ x, width, inset, color }) {
  return (
    <g stroke={color}>
      <rect x={x} y="623.500" width={width} height="36" />
      <path d={`M${x} 641.500L${x + inset} 652.500H${x + width - inset}L${x + width} 641.500`} />
    </g>
  )
}

function Foot({ x, y, color }) {
  return <path d={`M${x} ${y}v87h36v-62h73v62h37v-87`} stroke={color} />
}

function Drawing() {
  return (
    <svg className="absolute inset-0 h-full w-full" fill="none" shapeRendering="crispEdges">
      <g fill="#4c4858" fontSize="27" className="font-['Liberation_Sans',Arial,sans-serif]">
        <text x="146" y="48">Übergangsmodul 1</text>
        <text x="460" y="48">Übergangsmodul 2</text>
        <text x="802" y="48">Filtermodul 1</text>
        <text x="1045" y="48">Filtermodul 2</text>
        <text x="1312" y="48">Filtermodul 3</text>
        <g textAnchor="end">
          <text x="208" y="223">te, ist das ich nun</text>
          <text x="191" y="256">modulen meinen</text>
          <text x="163" y="288">n lassen kann.</text>
          <text x="233" y="485">asis 1 - Übergang 1</text>
        </g>
      </g>

      <path d="M713.500 2000V162.500H4000" stroke="#5a5668" />

      <rect x="391.500" y="137.500" width="182" height="363" stroke="#6d131f" />
      <path d="M391.500 500.500v37h182v-37M391.500 519.500l18 9.500h146l18-9.500" stroke="#1f7d8a" />
      <path d="M409.500 537.500v87h36v-62h73v62h37v-87" stroke="#8a8238" />
      <path d="M391.500 2000V733.500h182V2000" stroke="#1f6b2a" />

      <Plate x={798.5} width={182} inset={18} color="#37cf45" />
      <Plate x={1162.5} width={182} inset={18} color="#37cf45" />
      <Plate x={1435.5} width={363} inset={36} color="#37cf45" />
      <Plate x={1889.5} width={182} inset={18} color="#37cf45" />
      <rect x="798.500" y="41.500" width="182" height="290" stroke="#c024c8" />
      <rect x="1162.500" y="331.500" width="182" height="292" stroke="#c024c8" />

      <Foot x={816.5} y={659.5} color="#b01c20" />
      <Foot x={1180.5} y={659.5} color="#b01c20" />
      <Foot x={1544.5} y={659.5} color="#b01c20" />

      {/* UCS icon */}
      <path d="M889.500 697v50.500H940M885.500 742.500h9v9h-9z" stroke="#fff" />
      <g fill="#fff" fontSize="18" className="font-['Roboto',sans-serif] font-light">
        <text x="892" y="693">Y</text>
        <text x="945" y="746">X</text>
      </g>

      {/* crosshair */}
      <path d="M949.500 415v43M949.500 468v44M901 463.500h44M954 463.500h44M945.500 459.500h8v8h-8z" stroke="#fff" />
    </svg>
  )
}

function Toolbar({ position, groups }) {
  return (
    <div role="toolbar" className={clsx('absolute flex h-10 items-center border border-[#444] bg-[#5e5e5e]', position)}>
      <span className="flex h-full w-2 justify-center bg-[#555] pt-1">
        <span className="h-3.5 w-1 border-x border-dotted border-[#222]" />
      </span>
      {groups.map((icons, idx) => (
        <div key={idx} className="flex shrink-0 items-center">
          {idx > 0 && <span className="mx-[3px] h-[34px] w-1.5 border-x border-[#8a8a8a]" />}
          {icons.map(({ icon, small, label }) => (
            <button key={icon} type="button" aria-label={label} className="flex h-9 w-[39px] shrink-0 items-center justify-center">
              {small ? <Icon name={icon} size={32} /> : <BigIcon name={icon} />}
            </button>
          ))}
        </div>
      ))}
      <button type="button" aria-label="Werkzeugkasten schließen" className="flex h-full w-2 justify-center bg-[#535353] pt-1">
        <Svg size={6} box={6}>
          <path d="M0 0l6 6M6 0L0 6" stroke="#ddd" strokeWidth="1.500" />
        </Svg>
      </button>
    </div>
  )
}

const DRAW_TOOLS = [
  [
    { icon: 'circle', label: 'Kreis' },
    { icon: 'spline', label: 'Spline' },
    { icon: 'xline', label: 'Konstruktionslinie' },
    { icon: 'ray', label: 'Strahl' },
    { icon: 'ellipseTilt', label: 'Ellipse' },
  ],
]

const EDIT_TOOLS = [
  [{ icon: 'box3d', label: 'Quader' }],
  [
    { icon: 'hatch', small: true, label: 'Schraffur' },
    { icon: 'boundary', small: true, label: 'Umgrenzung' },
  ],
  [
    { icon: 'cols', label: 'Nebeneinander' },
    { icon: 'rows', label: 'Untereinander' },
    { icon: 'frames', label: 'Überlappend' },
  ],
  [{ icon: 'cloud', label: 'Revisionswolke' }],
]

function NavBar() {
  return (
    <div className="absolute top-[27px] right-1 flex h-[132px] w-8 flex-col items-center rounded-sm border border-[#5c586a] bg-[#484356]">
      <div className="flex h-2.5 w-full items-center justify-end bg-[#625e6f] pr-0.5">
        <Svg size={8} box={8}>
          <circle cx="4" cy="4" r="3.500" fill="#3c384a" />
          <path d="M2.500 2.500l3 3M5.500 2.500l-3 3" stroke="#77738a" />
        </Svg>
      </div>
      <button type="button" aria-label="SteeringWheel" className="mt-2 flex w-6 justify-center border-b border-[#5c586a] pb-0.5">
        <Svg size={24} box={24}>
          <path d="M1 11C1 4 5 1 11 1h8v10c0 6-3 9-8 9S1 17 1 11z" stroke="#2f2a3e" />
          <circle cx="10" cy="10" r="4.500" stroke="#2f2a3e" />
          <path d="M3 3l4 4M14 6l4-4M3 18l4-4" stroke="#2f2a3e" />
          <text x="12" y="23" fontSize="9" fontWeight="bold" fill="#2b2c52">2D</text>
        </Svg>
      </button>
      <button type="button" aria-label="Pan" className="mt-1">
        <Svg size={24}>
          <path
            d="M5 15L1.500 9.500c-.6-1.200.6-1.900 1.500-1L5 10 3.500 4c-.2-1.200 1.300-1.500 1.700-.4L6.700 8 6.500 2c0-1.300 1.700-1.300 1.900 0L9 8l1.200-5.200c.4-1.200 1.900-.8 1.800.4L11.200 8.500l1.600-2.800c.7-1 2-.3 1.600.9L12 12l-1 3z"
            stroke="#2f2a3e"
            strokeWidth=".8"
          />
        </Svg>
      </button>
      <button type="button" aria-label="Zoom" className="mt-1">
        <Svg size={24} box={24}>
          <path d="M1 1l14 14M15 1L1 15M1 5V1h4M11 1h4v4M1 11v4h4" stroke="#2f2a3e" />
          <circle cx="16" cy="15" r="5" fill="#484356" stroke="#2f2a3e" />
          <path d="M20 19l4 4" stroke="#2f2a3e" strokeWidth="2" />
        </Svg>
      </button>
      <svg width="6" height="4" viewBox="0 0 6 4" className="mt-1.5">
        <path d="M0 0h6L3 4z" fill="#2f2a3e" />
      </svg>
      <Svg size={8} box={8} className="mt-auto mr-0.5 mb-0.5 self-end">
        <circle cx="4" cy="4" r="3.500" stroke="#2f2a3e" />
        <path d="M2 4h4" stroke="#2f2a3e" />
      </Svg>
    </div>
  )
}

function DocumentButtons() {
  return (
    <div className="absolute top-2.5 right-3 flex items-center gap-2.5">
      <button type="button" aria-label="Zeichnung minimieren" className="flex h-2.5 w-2.5 items-end">
        <span className="h-1 w-full bg-[#eee]" />
      </button>
      <button type="button" aria-label="Zeichnung wiederherstellen">
        <Svg size={10} box={10}>
          <path d="M2.500 1h6.500v6.500" stroke="#eee" />
          <path d="M1 3h6v6H1z" stroke="#eee" strokeWidth="2" />
        </Svg>
      </button>
      <button type="button" aria-label="Zeichnung schließen">
        <Svg size={10} box={10}>
          <path d="M1 1l8 8M9 1L1 9" stroke="#eee" strokeWidth="2.500" />
        </Svg>
      </button>
    </div>
  )
}

function VerticalScroll() {
  return (
    <div className="flex w-4 shrink-0 flex-col items-center justify-between border-l border-white bg-[#eee] py-1.5">
      <svg width="7" height="4" viewBox="0 0 7 4">
        <path d="M0 4h7L3.500 0z" fill="#333" />
      </svg>
      <span className="-mt-10 h-[15px] w-[15px] border border-[#888] bg-linear-to-r from-[#f4f4f4] to-[#c4c4c8]" />
      <svg width="7" height="4" viewBox="0 0 7 4">
        <path d="M0 0h7L3.500 4z" fill="#333" />
      </svg>
    </div>
  )
}

function HorizontalScroll() {
  return (
    <div className="flex h-[17px] items-center border-t border-white bg-[#ececec] px-1.5">
      <svg width="4" height="7" viewBox="0 0 4 7">
        <path d="M4 0v7L0 3.500z" fill="#222" />
      </svg>
      <span className="ml-[97px] h-[15px] w-[15px] border border-[#888] bg-linear-to-b from-[#f8f8f8] to-[#cfcfd2]" />
      <svg width="4" height="7" viewBox="0 0 4 7" className="mr-4 ml-auto">
        <path d="M0 0v7l4-3.500z" fill="#222" />
      </svg>
    </div>
  )
}

const HISTORY = [
  ['Drehwinkel angeben <0>: 0', 'text-[#8d8a98] bg-white/15'],
  ['Befehl: _.USERR2', 'text-[#9d9aa6] bg-white/20'],
  ['Neuen Wert für USERR2 eingeben <5700.0000>: 9700', 'text-[#bebcc4] bg-white/25'],
]

function CommandLine() {
  return (
    <div className="absolute right-[381px] bottom-0 left-[389px]">
      <div className="flex flex-col items-start gap-px pb-px pl-14 font-['Liberation_Mono',monospace] text-xs leading-[15px]">
        {HISTORY.map(([line, tone]) => (
          <p key={line} className={clsx('rounded-xs px-0.5 whitespace-pre', tone)}>
            {line}
          </p>
        ))}
      </div>
      <div className="flex h-[27px] border border-[#8c8c90]">
        <div className="flex w-[53px] items-center gap-1.5 bg-linear-to-b from-[#77777c] to-[#5c5c5c] pl-0.5">
          <span className="h-5 w-1.5 border-x-2 border-dotted border-[#aaa]" />
          <button type="button" aria-label="Befehlszeile schließen">
            <Svg size={10} box={10}>
              <path d="M1 1l8 8M9 1L1 9" stroke="#f4f4f4" strokeWidth="2" />
            </Svg>
          </button>
          <button type="button" aria-label="Anpassen">
            <Svg>
              <path d="M1 4l3 2 2-2-2-3c4-1 6 2 5 5l6 7-2 2-6-6C3 10 1 7 1 4z" fill="#f4f4f4" stroke="#444" strokeWidth=".5" />
            </Svg>
          </button>
        </div>
        <div className="flex min-w-0 flex-1 items-center bg-white/70 pr-1 pl-1">
          <Svg>
            <path d="M.5 1.500h15v13H.5z" fill="#d5dbe4" stroke="#8792a2" />
            <path d="M3 5l4 3-4 3M8 12h5" stroke="#445" />
          </Svg>
          <svg width="6" height="4" viewBox="0 0 6 4" className="mr-1.5 ml-1">
            <path d="M0 0h6L3 4z" fill="#888" />
          </svg>
          <input
            aria-label="Befehlszeile"
            placeholder="Befehl eingeben"
            className="min-w-0 flex-1 bg-transparent font-['Liberation_Mono',monospace] text-xs italic placeholder:text-[#9c9ca4]"
          />
          <svg width="7" height="4" viewBox="0 0 7 4">
            <path d="M0 4h7L3.500 0z" fill="#555" />
          </svg>
        </div>
      </div>
    </div>
  )
}

/* ---------- status bar ---------- */

const LAYOUT_TABS = ['Modell', 'Layout1', 'Layout2']

function LayoutTabs() {
  return (
    <div className="flex items-start pl-2.5 text-[11px]">
      {LAYOUT_TABS.map((label, idx) => (
        <a
          key={label}
          href="#drawing"
          className={clsx(
            'flex h-[18px] w-16 items-center justify-center rounded-b-lg pb-0.5 [clip-path:polygon(0_0,100%_0,calc(100%-5px)_100%,5px_100%)]',
            idx === 0 ? 'bg-linear-to-b from-[#606060] to-[#8c8c8c] font-bold text-white' : 'bg-[#575757] text-[#bcbcbc]',
          )}
        >
          {label}
        </a>
      ))}
      <button type="button" aria-label="Neues Layout" className="ml-1.5 flex h-[17px] w-5 items-center justify-center rounded-tl-sm rounded-br-lg bg-[#5a5a5a]">
        <Svg size={8} box={8}>
          <path d="M4 0v8M0 4h8" stroke="#ddd" strokeWidth="2" />
        </Svg>
      </button>
    </div>
  )
}

const STATUS = [
  { width: 'w-[66px]', items: ['grid', 'snap', '▾'] },
  { width: 'w-[103px]', items: ['ortho', 'polar', '▾', 'iso', '▾'] },
  { width: 'w-[66px]', items: ['track', 'osnap', '▾'] },
  { width: 'w-[112px]', items: ['annoVis', 'annoAuto', 'anno', '1:1', '▾'] },
  { width: 'w-[41px]', items: ['cog', '▾'] },
  { width: 'w-[25px]', items: ['plus'] },
  { width: 'w-[27px]', items: ['shapes'] },
  { width: 'w-[27px]', items: ['perf'] },
  { width: 'w-[26px]', items: ['trusted'] },
  { width: 'w-[51px]', items: ['clean', 'menu'] },
]

function StatusItem({ item }) {
  if (item === '▾') return <BigCaret />
  if (item === '1:1') return <span>1:1</span>
  return (
    <button type="button" aria-label={item}>
      <Icon name={item} />
    </button>
  )
}

function StatusBar() {
  return (
    <footer className="flex h-[29px] items-start justify-between border-b-2 border-[#2c2828] bg-[#373737]">
      <LayoutTabs />
      <div className="flex h-[27px] text-xs text-white">
        <button type="button" className="w-[55px] border border-[#8a8a8a] bg-[#4f4f4f]">
          MODELL
        </button>
        {STATUS.map(({ width, items }) => (
          <div key={items[0]} className={clsx('flex items-center justify-around border border-[#8a8a8a] bg-[#4f4f4f]', width)}>
            {items.map((item, idx) => (
              <StatusItem key={idx} item={item} />
            ))}
          </div>
        ))}
      </div>
    </footer>
  )
}

export default function App() {
  return (
    <div className="flex min-h-screen flex-col overflow-hidden bg-[#373737] font-['Noto_Sans','Open_Sans',sans-serif] leading-4">
      <svg width="0" height="0" className="absolute">
        <defs>
          <linearGradient id="disc" x1="0" y1="0" x2="0" y2="1">
            <stop offset="0" stopColor="#fafafa" />
            <stop offset="1" stopColor="#bfc3cc" />
          </linearGradient>
        </defs>
      </svg>
      <Header />
      <Ribbon />
      <FileTabs />
      <div className="flex min-h-0 flex-1">
        <main className="relative flex min-w-0 flex-1 flex-col">
          <div className="flex flex-1">
            <div id="drawing" className="relative flex-1 overflow-hidden bg-[#08001e]">
              <Drawing />
              <Toolbar position="top-[27px] left-[200px]" groups={DRAW_TOOLS} />
              <Toolbar position="top-[151px] left-[219px]" groups={EDIT_TOOLS} />
              <DocumentButtons />
              <NavBar />
            </div>
            <VerticalScroll />
          </div>
          <HorizontalScroll />
          <CommandLine />
        </main>
        <div className="w-[9px] shrink-0 border-r-2 border-[#16323c] bg-linear-to-b from-[#a8c8e4] via-[#b9d1e8] to-[#b4cfe8]" />
      </div>
      <StatusBar />
    </div>
  )
}
